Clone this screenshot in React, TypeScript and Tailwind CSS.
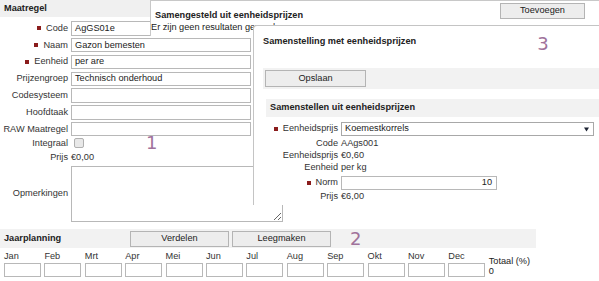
import type { ReactNode } from 'react';

const months = ['Jan', 'Feb', 'Mrt', 'Apr', 'Mei', 'Jun', 'Jul', 'Aug', 'Sep', 'Okt', 'Nov', 'Dec'];

function Req() {
  return <span className="inline-block w-[4px] h-[4px] bg-[#8a1c1c] mr-[5px]" />;
}

function Field({ value = '' }: { value?: string }) {
  return (
    <div className="h-[14.5px] w-[180px] border border-[#b8b8b8] bg-white px-[3px] flex items-center leading-none text-[#222]">
      {value}
    </div>
  );
}

function Row({ label, req, children, h = 'h-[16.8px]' }: { label: string; req?: boolean; children: ReactNode; h?: string }) {
  return (
    <div className={`flex items-center ${h}`}>
      <div className="w-[68px] flex items-center justify-end whitespace-nowrap">
        {req && <Req />}
        {label}
      </div>
      <div className="ml-[3px]">{children}</div>
    </div>
  );
}

function Btn({ label, w }: { label: string; w: string }) {
  return (
    <div className={`${w} h-[16px] flex items-center justify-center bg-[#ededed] border border-[#b4b4b4] text-[#222]`}>
      {label}
    </div>
  );
}

function SubRow({ label, req, children, h }: { label: string; req?: boolean; children: ReactNode; h: string }) {
  return (
    <div className={`flex items-center ${h}`}>
      <div className="w-[75px] flex items-center justify-end whitespace-nowrap">
        {req && <Req />}
        {label}
      </div>
      <div className="ml-[3px] flex items-center">{children}</div>
    </div>
  );
}

export default function App() {
  return (
    <div className="relative w-[599px] h-[281px] overflow-hidden bg-white text-[#333] text-[9.2px] font-['Liberation_Sans',Arial,sans-serif] leading-none">
      {/* Maatregel form */}
      <div className="h-[17px] bg-[#f0f0f0] flex items-center pl-[4px] font-bold text-[#222]">Maatregel</div>
      <div className="pt-[3px]">
        <Row label="Code" req><Field value="AgGS01e" /></Row>
        <Row label="Naam" req><Field value="Gazon bemesten" /></Row>
        <Row label="Eenheid" req><Field value="per are" /></Row>
        <Row label="Prijzengroep"><Field value="Technisch onderhoud" /></Row>
        <Row label="Codesysteem"><Field /></Row>
        <Row label="Hoofdtaak"><Field /></Row>
        <Row label="RAW Maatregel"><Field /></Row>
        <Row label="Integraal" h="h-[11.5px]">
          <span className="block w-[10px] h-[10px] ml-[3px] rounded-[2px] border border-[#b0b0b0] bg-[#e8e8e8]" />
        </Row>
        <Row label="Prijs" h="h-[16.5px]">
          <span>€0,00</span>
        </Row>
        <div className="flex items-center h-[56.5px]">
          <div className="w-[68px] text-right">Opmerkingen</div>
          <textarea readOnly className="ml-[3px] w-[212px] h-[56.5px] border border-[#b8b8b8] bg-white" />
        </div>
      </div>

      {/* Jaarplanning */}
      <div className="mt-[7px] w-[536px] h-[19px] bg-[#f2f2f2] flex items-center">
        <div className="w-[130px] pl-[4px] font-bold text-[#222]">Jaarplanning</div>
        <Btn label="Verdelen" w="w-[99px]" />
        <div className="ml-[3px]"><Btn label="Leegmaken" w="w-[99px]" /></div>
        <div className="ml-[19px] text-[18px] text-[#a0729b] font-['DejaVu_Sans',sans-serif]">2</div>
      </div>
      <div className="flex pl-[4px] pt-[4px]">
        {months.map((m) => (
          <div key={m} className="w-[40.4px]">
            <div className="h-[11px]">{m}</div>
            <div className="w-[37px] h-[14px] border border-[#b8b8b8] bg-white" />
          </div>
        ))}
        <div className="pt-[4px] leading-[10px] text-[#222]">
          <div>Totaal (%)</div>
          <div>0</div>
        </div>
      </div>

      {/* annotation 1 */}
      <div className="absolute left-[146px] top-[134px] text-[18px] text-[#a0729b] font-['DejaVu_Sans',sans-serif]">1</div>

      {/* Samengesteld uit eenheidsprijzen */}
      <div className="absolute left-[150px] top-0 right-[-2px] h-[36px] bg-white border-l border-t border-[#c8c8c8]">
        <div className="flex justify-between items-start">
          <div className="pt-[10px] pl-[4px] font-bold text-[#222]">Samengesteld uit eenheidsprijzen</div>
          <div className="mt-[2px] mr-[16px]"><Btn label="Toevoegen" w="w-[85px]" /></div>
        </div>
        <div className="mt-[3px] text-[#222]">Er zijn geen resultaten gevonden</div>
      </div>

      {/* Samenstelling met eenheidsprijzen */}
      <div className="absolute left-[253px] top-[25px] w-[352px] h-[180px] bg-white border-l border-t border-[#c4c4c4] rounded-tl-[4px] pl-[9px]">
        <div className="h-[32px] flex items-center">
          <div className="font-bold text-[#222]">Samenstelling met eenheidsprijzen</div>
          <div className="ml-[121px] mt-[3px] text-[18px] text-[#a0729b] font-['DejaVu_Sans',sans-serif]">3</div>
        </div>
        <div className="mt-[10px] h-[21px] bg-[#f2f2f2] flex items-center pl-[2px]">
          <div className="w-[101px] h-[17px] flex items-center justify-center bg-[#ededed] border border-[#b4b4b4] text-[#222]">Opslaan</div>
        </div>
        <div className="mt-[10px] ml-[3px] h-[18px] bg-[#f2f2f2] flex items-center pl-[4px] font-bold text-[#222]">
          Samenstellen uit eenheidsprijzen
        </div>
        <div className="mt-[5px]">
          <SubRow label="Eenheidsprijs" req h="h-[14px]">
            <div className="w-[253px] h-[14px] border border-[#a8a8a8] bg-white flex items-center justify-between pl-[3px] pr-[4px] text-[#222]">
              <span>Koemestkorrels</span>
              <svg width="5" height="5" viewBox="0 0 5 5"><path d="M0 0.5h5L2.5 4.5z" fill="#1c2333" /></svg>
            </div>
          </SubRow>
          <SubRow label="Code" h="h-[13px] mt-[1px]"><span>AAgs001</span></SubRow>
          <SubRow label="Eenheidsprijs" h="h-[12px]"><span>€0,60</span></SubRow>
          <SubRow label="Eenheid" h="h-[12px]"><span>per kg</span></SubRow>
          <SubRow label="Norm" req h="h-[14px] mt-[2px]">
            <div className="w-[156px] h-[14px] border border-[#b8b8b8] bg-white flex items-center justify-end pr-[4px] text-[#222]">10</div>
          </SubRow>
          <SubRow label="Prijs" h="h-[14px]"><span>€6,00</span></SubRow>
        </div>
      </div>
    </div>
  );
}
